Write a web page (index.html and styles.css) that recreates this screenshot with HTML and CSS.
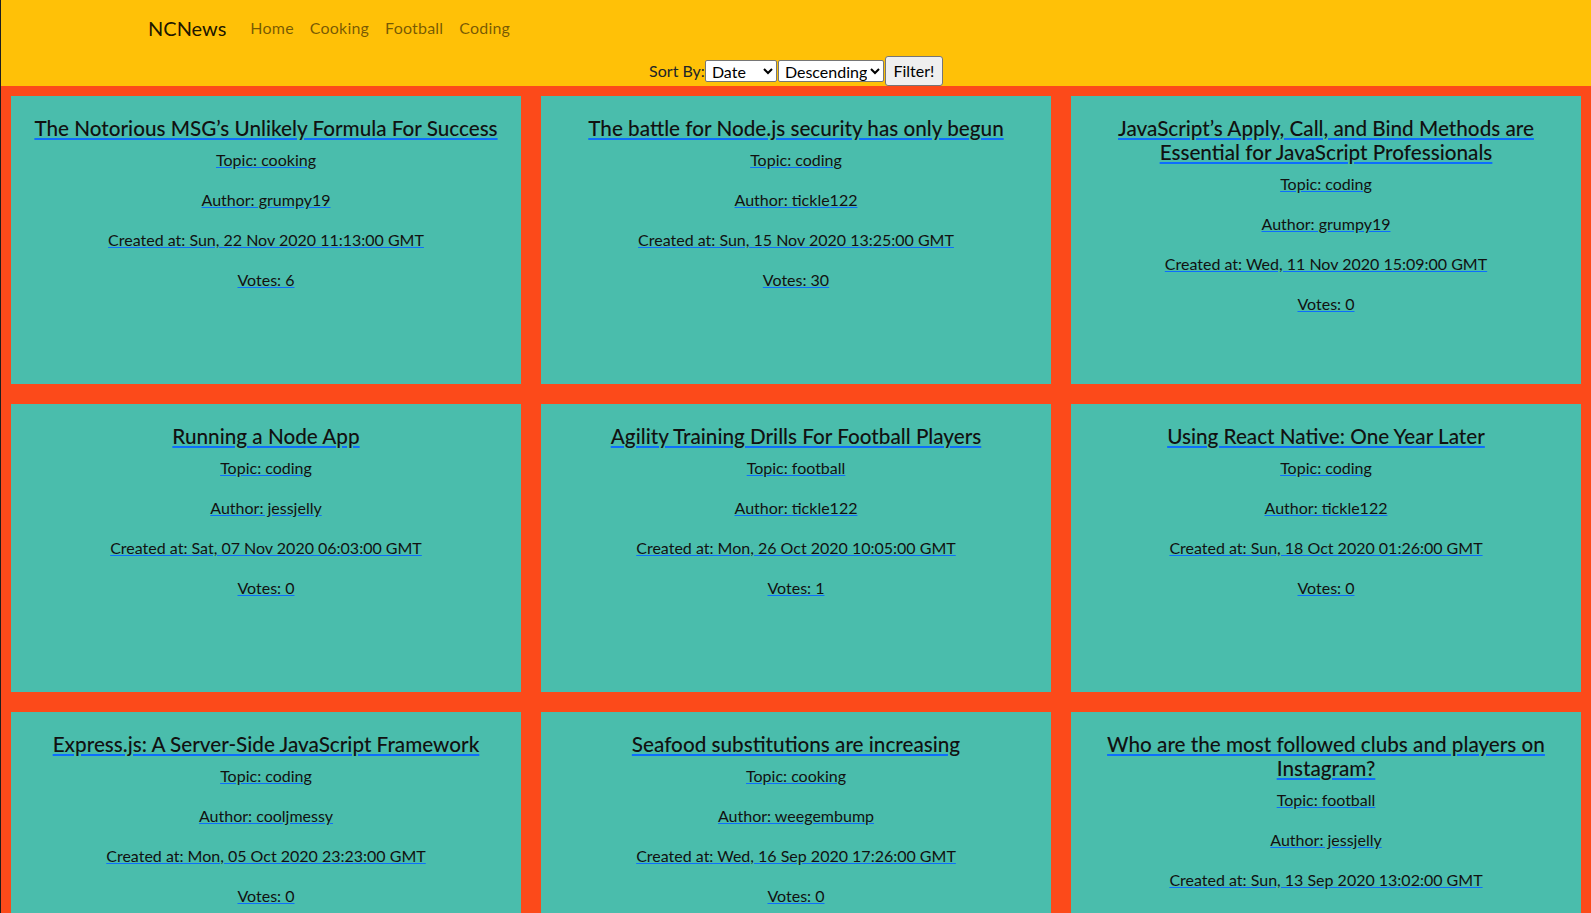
FILE: index.html
```html
<!DOCTYPE html>
<html lang="en">
<head>
<meta charset="utf-8">
<title>NCNews</title>
<link rel="stylesheet" href="styles.css">
</head>
<body>
<div class="app">
  <header class="topbar">
    <nav class="navbar">
      <div class="nav-container">
        <a class="brand" href="#">NCNews</a>
        <ul class="nav-links">
          <li><a class="nav-link" href="#">Home</a></li>
          <li><a class="nav-link" href="#">Cooking</a></li>
          <li><a class="nav-link" href="#">Football</a></li>
          <li><a class="nav-link" href="#">Coding</a></li>
        </ul>
      </div>
    </nav>
    <form class="sort-form">
      <label class="sort-label" for="sort-by">Sort By:</label>
      <select class="sort-select sort-by" id="sort-by">
        <option>Date</option>
        <option>Votes</option>
        <option>Comments</option>
      </select>
      <select class="sort-select sort-order">
        <option>Descending</option>
        <option>Ascending</option>
      </select>
      <button class="filter-btn" type="button">Filter!</button>
    </form>
  </header>

  <main class="articles">
    <article class="card">
      <a class="card-link" href="#">
        <h5 class="card-title">The Notorious MSG’s Unlikely Formula For Success</h5>
        <p class="card-text">Topic: cooking</p>
        <p class="card-text">Author: grumpy19</p>
        <p class="card-text">Created at: Sun, 22 Nov 2020 11:13:00 GMT</p>
        <p class="card-text">Votes: 6</p>
      </a>
    </article>
    <article class="card">
      <a class="card-link" href="#">
        <h5 class="card-title">The battle for Node.js security has only begun</h5>
        <p class="card-text">Topic: coding</p>
        <p class="card-text">Author: tickle122</p>
        <p class="card-text">Created at: Sun, 15 Nov 2020 13:25:00 GMT</p>
        <p class="card-text">Votes: 30</p>
      </a>
    </article>
    <article class="card">
      <a class="card-link" href="#">
        <h5 class="card-title">JavaScript’s Apply, Call, and Bind Methods are Essential for JavaScript Professionals</h5>
        <p class="card-text">Topic: coding</p>
        <p class="card-text">Author: grumpy19</p>
        <p class="card-text">Created at: Wed, 11 Nov 2020 15:09:00 GMT</p>
        <p class="card-text">Votes: 0</p>
      </a>
    </article>
    <article class="card">
      <a class="card-link" href="#">
        <h5 class="card-title">Running a Node App</h5>
        <p class="card-text">Topic: coding</p>
        <p class="card-text">Author: jessjelly</p>
        <p class="card-text">Created at: Sat, 07 Nov 2020 06:03:00 GMT</p>
        <p class="card-text">Votes: 0</p>
      </a>
    </article>
    <article class="card">
      <a class="card-link" href="#">
        <h5 class="card-title">Agility Training Drills For Football Players</h5>
        <p class="card-text">Topic: football</p>
        <p class="card-text">Author: tickle122</p>
        <p class="card-text">Created at: Mon, 26 Oct 2020 10:05:00 GMT</p>
        <p class="card-text">Votes: 1</p>
      </a>
    </article>
    <article class="card">
      <a class="card-link" href="#">
        <h5 class="card-title">Using React Native: One Year Later</h5>
        <p class="card-text">Topic: coding</p>
        <p class="card-text">Author: tickle122</p>
        <p class="card-text">Created at: Sun, 18 Oct 2020 01:26:00 GMT</p>
        <p class="card-text">Votes: 0</p>
      </a>
    </article>
    <article class="card">
      <a class="card-link" href="#">
        <h5 class="card-title">Express.js: A Server-Side JavaScript Framework</h5>
        <p class="card-text">Topic: coding</p>
        <p class="card-text">Author: cooljmessy</p>
        <p class="card-text">Created at: Mon, 05 Oct 2020 23:23:00 GMT</p>
        <p class="card-text">Votes: 0</p>
      </a>
    </article>
    <article class="card">
      <a class="card-link" href="#">
        <h5 class="card-title">Seafood substitutions are increasing</h5>
        <p class="card-text">Topic: cooking</p>
        <p class="card-text">Author: weegembump</p>
        <p class="card-text">Created at: Wed, 16 Sep 2020 17:26:00 GMT</p>
        <p class="card-text">Votes: 0</p>
      </a>
    </article>
    <article class="card">
      <a class="card-link" href="#">
        <h5 class="card-title">Who are the most followed clubs and players on Instagram?</h5>
        <p class="card-text">Topic: football</p>
        <p class="card-text">Author: jessjelly</p>
        <p class="card-text">Created at: Sun, 13 Sep 2020 13:02:00 GMT</p>
        <p class="card-text">Votes: 0</p>
      </a>
    </article>
  </main>
</div>
</body>
</html>
```

FILE: styles.css
```css
* {
  box-sizing: border-box;
}

body {
  margin: 0;
  font-family: Lato, "Open Sans", sans-serif;
  font-size: 16px;
  line-height: 1.5;
  color: #212529;
}

.app {
  border-left: 1px solid #1e1e1e;
  background: #fc4a1a;
  min-height: 100vh;
}

.topbar {
  background: #ffc107;
  height: 86px;
}

.navbar {
  padding: 8px 0 7px;
}

.nav-container {
  max-width: 1320px;
  margin: 0 auto;
  padding: 0 12px;
  display: flex;
  align-items: center;
}

.brand {
  font-size: 20px;
  line-height: 30px;
  padding: 5px 0;
  margin-right: 16px;
  color: rgba(0, 0, 0, 0.9);
  text-decoration: none;
}

.nav-links {
  display: flex;
  list-style: none;
  margin: 0;
  padding: 0;
}

.nav-link {
  display: block;
  padding: 8px;
  line-height: 24px;
  letter-spacing: 0.2px;
  color: rgba(0, 0, 0, 0.55);
  text-decoration: none;
}

.sort-form {
  height: 31px;
  display: flex;
  justify-content: center;
  align-items: center;
}

.sort-label {
  color: #212529;
}

.sort-select {
  font-family: inherit;
  font-size: 16px;
  height: 22px;
  margin: 0;
  padding: 0 0 0 2px;
  background: #fff;
  color: #000;
  border: 1px solid #767676;
  border-radius: 2px;
}

.sort-by {
  width: 72px;
}

.sort-order {
  width: 106px;
  margin-left: 1px;
}

.filter-btn {
  font-family: inherit;
  font-size: 16px;
  width: 58px;
  height: 30px;
  margin: 0 0 0 1px;
  padding: 1px 6px;
  background: #efefef;
  color: #000;
  border: 1px solid #767676;
  border-radius: 3px;
}

.articles {
  display: grid;
  grid-template-columns: repeat(3, 1fr);
  gap: 20px;
  padding: 10px;
}

.card {
  height: 288px;
  background: #4abdac;
  padding: 20px 16px 16px;
  text-align: center;
}

.card-link {
  display: block;
  color: #111;
  text-decoration: underline;
  text-decoration-color: #0d6efd;
}

.card-title {
  margin: 0 0 8px;
  font-size: 20.7px;
  font-weight: 500;
  line-height: 24px;
}

.card-text {
  margin: 0 0 16px;
  line-height: 24px;
}
```
